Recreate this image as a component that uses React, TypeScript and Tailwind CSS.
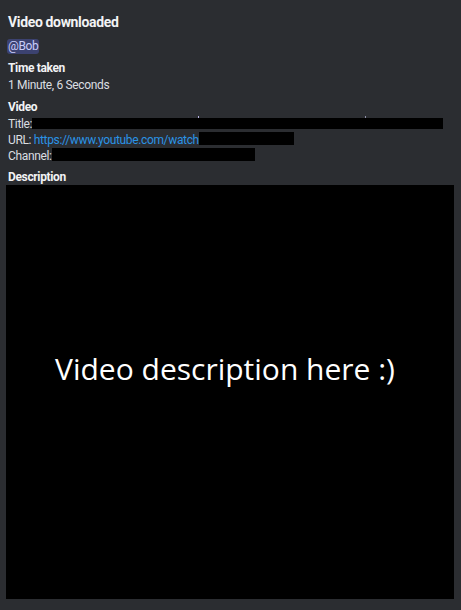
import React from 'react';

const Field: React.FC<{ name: string; className?: string; children: React.ReactNode }> = ({
  name,
  className = '',
  children,
}) => (
  <div className={`px-[2px] ${className}`}>
    <div className="text-[12px] font-bold leading-[15px] text-[#f2f3f5]">{name}</div>
    <div className="mt-[1px] text-[12px] leading-[16px] text-[#dbdee1]">{children}</div>
  </div>
);

const Redacted: React.FC<{ className: string; children?: React.ReactNode }> = ({ className, children }) => (
  <span className={`relative block bg-black ${className}`}>{children}</span>
);

export default function App() {
  return (
    <div className="min-h-[610px] w-[461px] bg-[#2b2d31] pl-[6px] pr-[7px] pt-[13px] pb-[11px] font-['Roboto',sans-serif] tracking-[-0.35px]">
      <div className="px-[2px] text-[14px] font-bold leading-[18px] text-[#f2f3f5]">Video downloaded</div>

      <div className="mt-[8px] flex px-[1px]">
        <span className="rounded-[3px] bg-[#3c4270] px-[1px] text-[12px] leading-[15px] text-[#c9cdfb]">@Bob</span>
      </div>

      <Field name="Time taken" className="mt-[7px]">
        1 Minute, 6 Seconds
      </Field>

      <Field name="Video" className="mt-[7px]">
        <div className="flex h-[16px] items-start">
          <span>Title:</span>
          <Redacted className="mt-[2px] h-[11px] w-[411px]">
            <span className="absolute left-[166px] top-[-2px] h-[2px] w-[1px] bg-[#b9b3e6]" />
            <span className="absolute left-[333px] top-[-2px] h-[2px] w-[1px] bg-[#8f8fa8]" />
          </Redacted>
        </div>
        <div className="flex h-[16px] items-start">
          <span className="whitespace-pre">URL: </span>
          <span className="text-[#2a93e6]">https://www.youtube.com/watch</span>
          <Redacted className="mt-[0px] h-[13px] w-[95px]" />
        </div>
        <div className="flex h-[16px] items-start">
          <span>Channel:</span>
          <Redacted className="mt-[0px] h-[13px] w-[203px]" />
        </div>
      </Field>

      <div className="mt-[6px] px-[2px] text-[12px] font-bold leading-[15px] text-[#f2f3f5]">Description</div>

      <div className="flex h-[414px] w-[448px] items-center justify-center bg-black pb-[47px] pr-[10px] tracking-normal">
        <span className="font-['Open_Sans',sans-serif] text-[30px] leading-[40px] text-white">
          Video description here :)
        </span>
      </div>
    </div>
  );
}
